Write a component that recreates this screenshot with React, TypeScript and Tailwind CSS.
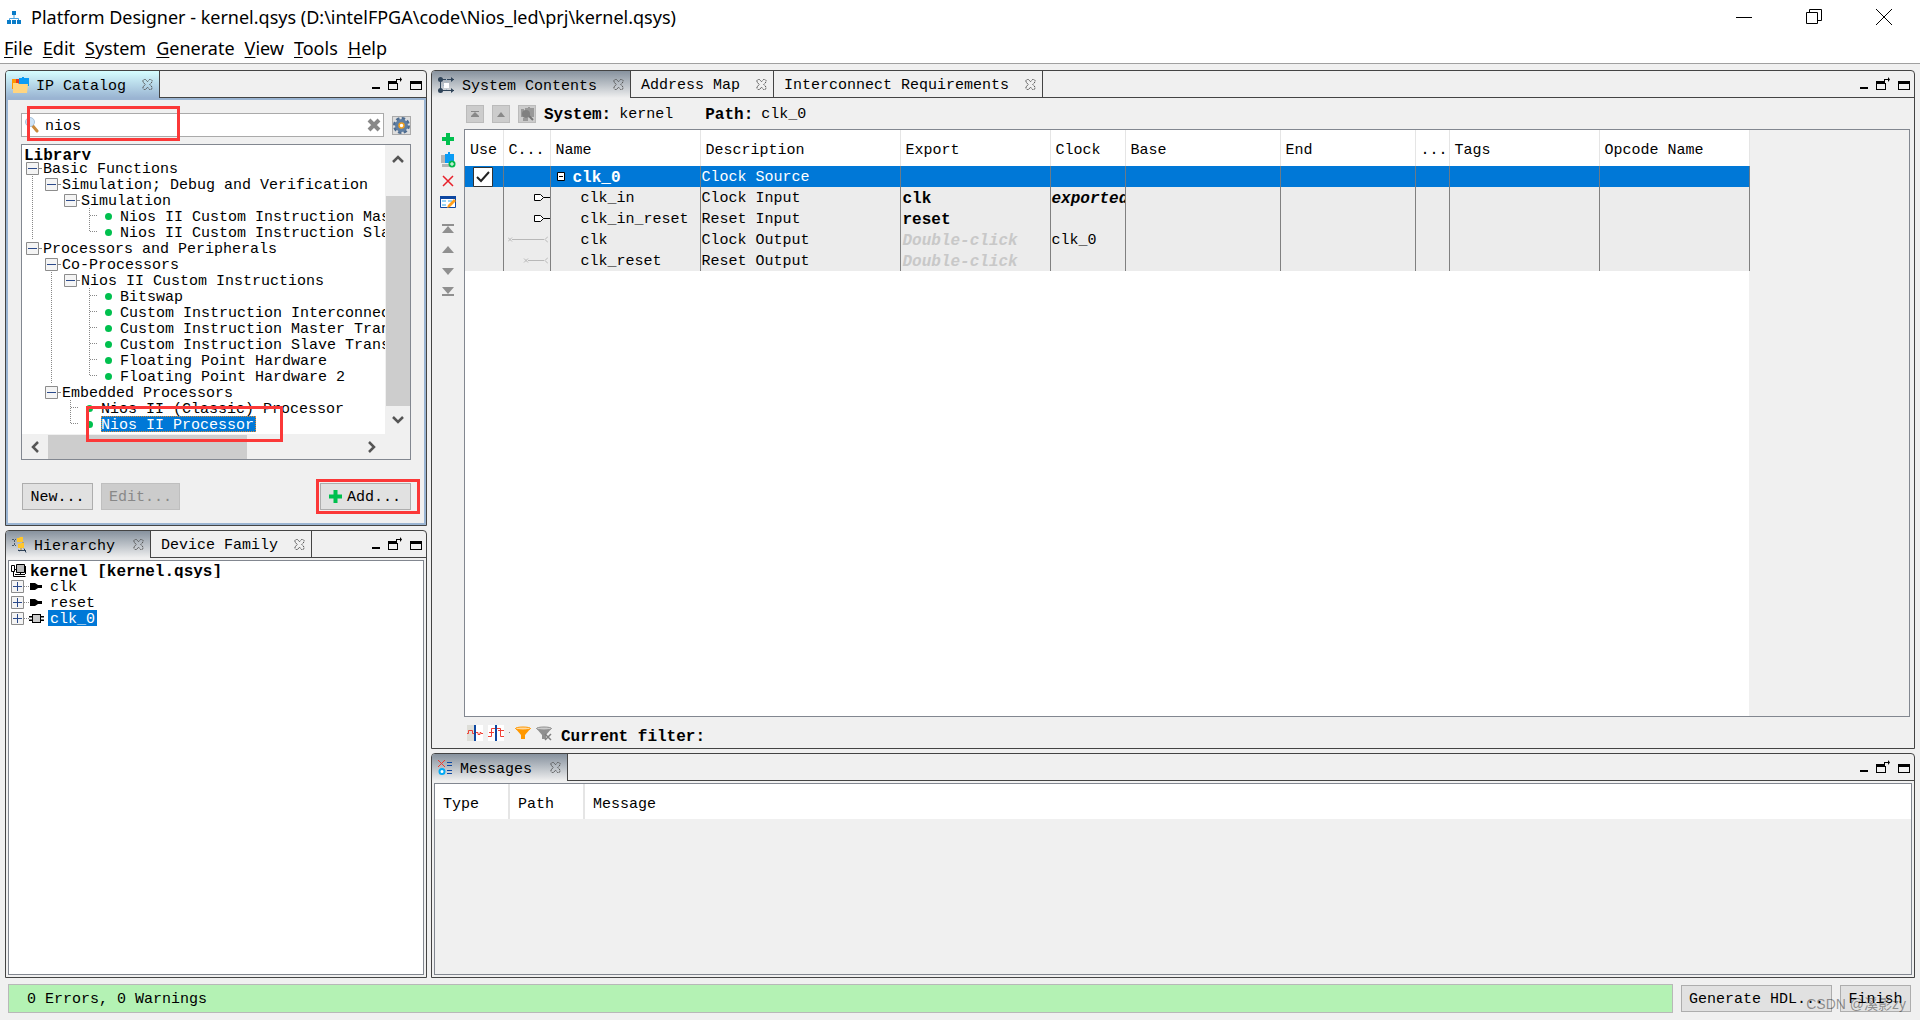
import type { ReactNode } from 'react';

type TabItem = { label: string; width: string; icon?: ReactNode };

interface TreeRow {
  // one char per indent level: '|' line, 'T' branch, 'L' last branch, ' ' blank
  guides: string;
  text: string;
  leaf?: boolean;
  selected?: boolean;
}

const libraryRows: TreeRow[] = [
  { guides: '', text: 'Basic Functions' },
  { guides: '|', text: 'Simulation; Debug and Verification' },
  { guides: '| ', text: 'Simulation' },
  { guides: '|  T', text: 'Nios II Custom Instruction Master', leaf: true },
  { guides: '|  L', text: 'Nios II Custom Instruction Slave', leaf: true },
  { guides: '', text: 'Processors and Peripherals' },
  { guides: ' ', text: 'Co-Processors' },
  { guides: ' |', text: 'Nios II Custom Instructions' },
  { guides: ' | T', text: 'Bitswap', leaf: true },
  { guides: ' | T', text: 'Custom Instruction Interconnect', leaf: true },
  { guides: ' | T', text: 'Custom Instruction Master Translator', leaf: true },
  { guides: ' | T', text: 'Custom Instruction Slave Translator', leaf: true },
  { guides: ' | T', text: 'Floating Point Hardware', leaf: true },
  { guides: ' | L', text: 'Floating Point Hardware 2', leaf: true },
  { guides: ' ', text: 'Embedded Processors' },
  { guides: '  T', text: 'Nios II (Classic) Processor', leaf: true },
  { guides: '  L', text: 'Nios II Processor', leaf: true, selected: true },
];

const columns = [
  { label: 'Use', width: 'w-[38px]' },
  { label: 'C...', width: 'w-[47px]' },
  { label: 'Name', width: 'w-[150px]' },
  { label: 'Description', width: 'w-[200px]' },
  { label: 'Export', width: 'w-[150px]' },
  { label: 'Clock', width: 'w-[75px]' },
  { label: 'Base', width: 'w-[155px]' },
  { label: 'End', width: 'w-[135px]' },
  { label: '...', width: 'w-[34px]' },
  { label: 'Tags', width: 'w-[150px]' },
  { label: 'Opcode Name', width: 'w-[150px]' },
];

const signals = [
  { name: 'clk_in', description: 'Clock Input', exported: 'clk', clock: 'exported', wire: 'pin' },
  { name: 'clk_in_reset', description: 'Reset Input', exported: 'reset', clock: '', wire: 'pin' },
  { name: 'clk', description: 'Clock Output', exported: '', clock: 'clk_0', wire: 'long' },
  { name: 'clk_reset', description: 'Reset Output', exported: '', clock: '', wire: 'short' },
];

const menus = ['File', 'Edit', 'System', 'Generate', 'View', 'Tools', 'Help'];

const CloseGlyph = () => (
  <svg width="11" height="11" viewBox="0 0 11 11" fill="none" stroke="#555" strokeWidth="1">
    <path d="M1 1.5 2 .5h1.5l2 2.2 2-2.2H9l1 1V3L7.8 5.5 10 8v1.5l-1 1H7.5l-2-2.3-2 2.3H2l-1-1V8l2.2-2.5L1 3z" strokeDasharray="2 .6" />
  </svg>
);

const PlusGlyph = () => (
  <svg width="13" height="13" viewBox="0 0 13 13" fill="#00c04e">
    <path d="M4.5 0h4v4.5H13v4H8.5V13h-4V8.5H0v-4h4.5z" />
  </svg>
);

const FolderIcon = () => (
  <svg width="17" height="16" viewBox="0 0 17 16">
    <path d="M0 2h4v10H0z" fill="#ff9800" />
    <path d="M4 2h4v6H4z" fill="#e53b24" />
    <path d="M7 1h3V0h2v1h5v8H7z" fill="#0a9cf5" />
    <path d="M1 6h5l1 1h9l-1 9H1z" fill="#ffd580" />
  </svg>
);

const NetIcon = () => (
  <svg width="17" height="16" viewBox="0 0 17 16" fill="none" stroke="#2f4358">
    <path d="M2.500 3v10M3 2.500h13M3 13.500h13" />
    <path d="M8.500 2v4M8.500 10v4M5 8.500h2" stroke="#9fb4c9" strokeDasharray="1 1" />
    <g fill="#2f4358" stroke="none">
      <circle cx="2.500" cy="2.500" r="2.500" />
      <circle cx="2.500" cy="13.500" r="2.500" />
      <path d="M13 0 16 2.500 13 5zM13 11 16 13.500 13 16z" />
    </g>
    <path d="M6 6h5v5H6z" fill="#fff" stroke="none" />
  </svg>
);

const HierarchyIcon = () => (
  <svg width="15" height="16" viewBox="0 0 15 16">
    <path d="M2.500 3v6M0 2.500h4M0 8.500h4" stroke="#4b5a68" fill="none" strokeDasharray="2 1" />
    <path d="M5 1h2l1-1h3v5H5zM6 7h2l1-1h3v5H6z" fill="#ffc62b" />
    <path d="M11 5v1M9 11v2" stroke="#b78a1d" />
    <path d="M6 13.500h8m-2-2 2 4M6 13l2 1" stroke="#2f4358" fill="none" />
  </svg>
);

const MessagesIcon = () => (
  <svg width="15" height="15" viewBox="0 0 15 15">
    <path d="M0 0 7 7M7 0 0 7" stroke="#ef3b2d" />
    <path d="M9 2.500h5M9 5.500h5M9 10.500h5M9 13.500h5" stroke="#0d47a1" />
    <circle cx="4" cy="11.500" r="2.500" fill="#fff" stroke="#03a9f4" strokeWidth="2" />
  </svg>
);

function Panel({ tabs, blue, className, children }: { tabs: TabItem[]; blue?: boolean; className: string; children: ReactNode }) {
  const gradient = blue ? 'from-[#d6feff] to-[#9ab4d2]' : 'from-[#87929e] to-[#f0f0f0]';
  return (
    <section className={`flex flex-col rounded-t-[4px] border border-[#444] bg-[#f0f0f0] ${className}`}>
      <div className="flex h-[27px] shrink-0">
        {tabs.map((tab, i) => (
          <div
            key={tab.label}
            className={`flex shrink-0 items-center border-r border-[#444] pr-1.5 ${tab.width} ${
              i === 0 ? `rounded-tl-[3px] bg-linear-to-b pl-1.5 ${gradient}` : 'border-b pl-2.5'
            }`}
          >
            <button className="flex items-center gap-[7px] whitespace-nowrap">
              {tab.icon}
              <span className="pt-1">{tab.label}</span>
            </button>
            <button className="ml-auto" aria-label={`Close ${tab.label}`}>
              <CloseGlyph />
            </button>
          </div>
        ))}
        <div className="flex flex-1 items-center justify-end gap-2 border-b border-[#444] pr-1">
          <button aria-label="Minimize">
            <svg width="8" height="14" viewBox="0 0 8 14"><path d="M0 10h8v2H0z" /></svg>
          </button>
          <button aria-label="Detach">
            <svg width="14" height="14" viewBox="0 0 14 14">
              <path d="M0 4h9v3H0zM0 4h1v9H0zM9 6h1v7H9zM0 12h10v1H0zM8 2h4V0l2 2.500L12 5V3H9v2H8z" />
            </svg>
          </button>
          <button aria-label="Maximize">
            <svg width="12" height="14" viewBox="0 0 12 14"><path d="M0 4h12v9H0zM1 7v5h10V7z" fillRule="evenodd" /></svg>
          </button>
        </div>
      </div>
      {children}
    </section>
  );
}

function Toggle({ plus }: { plus?: boolean }) {
  return (
    <svg width="13" height="13" viewBox="0 0 13 13" className="shrink-0">
      <path d="M.5.5h12v12H.5z" fill="#f4f4f4" stroke="#8c8c8c" />
      <path d={plus ? 'M2 6.500h9M6.500 2v9' : 'M2 6.500h9'} stroke="#2b4a8b" />
    </svg>
  );
}

function Guide({ kind }: { kind: string }) {
  return (
    <svg width="19" height="16" viewBox="0 0 19 16" className="shrink-0" stroke="#888" strokeDasharray="1 1" fill="none">
      {(kind === '|' || kind === 'T') && <path d="M10.500 0v16" />}
      {kind === 'L' && <path d="M10.500 0v8" />}
      {(kind === 'T' || kind === 'L') && <path d="M11 7.500h8" />}
    </svg>
  );
}

function LibraryTree() {
  return (
    <ul className="h-[289px] flex-1 overflow-hidden bg-white">
      <li className="h-[15px] overflow-hidden pl-0.5 text-base leading-[22px] font-bold">Library</li>
      {libraryRows.map((row) => (
        <li key={row.text} className="flex h-4 items-center overflow-hidden whitespace-nowrap">
          {row.guides.split('').map((kind, i) => (
            <Guide key={i} kind={kind} />
          ))}
          {row.leaf ? (
            <span className="mr-2 ml-[7px] size-[7px] shrink-0 rounded-full bg-[#00c04e]" />
          ) : (
            <span className="mr-0.5 ml-1 flex shrink-0 items-center">
              <Toggle />
              <span className="w-0.5 border-t border-dotted border-[#888]" />
            </span>
          )}
          <span
            className={
              row.selected
                ? 'h-4 bg-[#0078d7] pr-0.5 leading-5 text-white outline-1 -outline-offset-1 outline-dotted outline-[#e08a30]'
                : 'h-4 leading-5'
            }
          >
            {row.text}
          </span>
        </li>
      ))}
    </ul>
  );
}

function Chevron({ d }: { d: string }) {
  return (
    <svg width="12" height="12" viewBox="0 0 12 12" fill="none" stroke="#555" strokeWidth="2.5">
      <path d={d} />
    </svg>
  );
}

function IpCatalog() {
  return (
    <Panel blue className="relative" tabs={[{ label: 'IP Catalog', width: 'w-[154px]', icon: <FolderIcon /> }]}>
      <div className="border-2 border-[#9ab4d2] px-[13px] pt-[13px] pb-[13px]">
        <div className="flex items-center gap-2">
          <label className="flex h-6 flex-1 items-center border border-[#aaa] bg-white px-0.5">
            <svg width="15" height="16" viewBox="0 0 15 16" aria-hidden="true">
              <path d="m8 8 5 6" stroke="#c98a3c" strokeWidth="3" strokeLinecap="round" />
              <circle cx="6" cy="5" r="4.500" fill="#cfe4f7" stroke="#a9c3da" />
            </svg>
            <input aria-label="Search" defaultValue="nios" className="ml-1.5 w-full min-w-0 flex-1 pt-1 outline-none" />
            <button aria-label="Clear">
              <svg width="14" height="14" viewBox="0 0 14 14" stroke="#888" strokeWidth="4"><path d="m2 2 10 10M12 2 2 12" /></svg>
            </button>
          </label>
          <button aria-label="Settings" className="flex size-[19px] items-center justify-center border border-[#aaa] bg-[#ddd]">
            <svg width="17" height="17" viewBox="0 0 17 17">
              <circle cx="8.500" cy="8.500" r="7" fill="none" stroke="#4e6c8f" strokeWidth="3" strokeDasharray="3.300 2.200" />
              <circle cx="8.500" cy="8.500" r="4.500" fill="#fff" stroke="#5f7fa4" strokeWidth="4" />
              <circle cx="8.500" cy="8.500" r="2.500" fill="#fff" stroke="#f0a020" strokeWidth="1.500" />
            </svg>
          </button>
        </div>
        <div className="mt-[7px] border border-[#828790]">
          <div className="flex">
            <LibraryTree />
            <div className="flex w-[25px] flex-col items-center justify-between py-2">
              <Chevron d="M1 9 6 4l5 5" />
              <div className="mt-[31px] w-6 flex-1 bg-[#cdcdcd]" />
              <div className="pt-2">
                <Chevron d="m1 3 5 5 5-5" />
              </div>
            </div>
          </div>
          <div className="flex h-[25px] items-center pr-8 pl-[7px]">
            <Chevron d="M9 1 4 6l5 5" />
            <div className="ml-[7px] h-6 w-[199px] bg-[#cdcdcd]" />
            <div className="ml-auto">
              <Chevron d="m3 1 5 5-5 5" />
            </div>
          </div>
        </div>
        <div className="mt-[23px] flex h-[27px] gap-2 pl-px">
          <button className="w-[71px] border border-[#adadad] bg-[#e1e1e1] pt-0.5">New...</button>
          <button disabled className="w-[79px] border border-[#bfbfbf] bg-[#ccc] pt-0.5 text-[#888]">Edit...</button>
          <button className="ml-auto flex w-[91px] items-center gap-[5px] border border-[#adadad] bg-[#e1e1e1] pl-2">
            <PlusGlyph />
            <span className="pt-0.5">Add...</span>
          </button>
        </div>
      </div>
      {/* highlight frames */}
      <div className="pointer-events-none absolute top-[35px] left-[21px] h-[35px] w-[153px] border-[3px] border-[#fb3838]" />
      <div className="pointer-events-none absolute top-[335px] left-[80px] h-9 w-[197px] border-[3px] border-[#fb3838]" />
      <div className="pointer-events-none absolute top-[408px] left-[310px] h-[35px] w-[104px] border-[3px] border-[#fb3838]" />
    </Panel>
  );
}

function Hierarchy() {
  return (
    <Panel
      className="flex-1"
      tabs={[
        { label: 'Hierarchy', width: 'w-[145px]', icon: <HierarchyIcon /> },
        { label: 'Device Family', width: 'w-[161px]' },
      ]}
    >
      <ul className="m-0.5 flex-1 border border-[#828790] bg-white pt-px pl-0.5">
        <li className="flex h-4 items-center gap-1 overflow-hidden text-base leading-4 font-bold">
          <svg width="15" height="15" viewBox="0 0 15 15" stroke="#000" fill="none">
            <path d="M5.500 1.500h8v8h-8z" fill="#bbb" />
            <path d="M.500 2.500h3v6h-3zM3 6.500h2M2.500 9v4.500h12M4 11.500h10M9.500 10v2M14.500 3v8" />
          </svg>
          <span className="h-4 leading-5">kernel [kernel.qsys]</span>
        </li>
        {['clk', 'reset', 'clk_0'].map((name) => (
          <li key={name} className="flex h-4 items-center">
            <Toggle plus />
            <span className="w-[5px] border-t border-dotted border-[#888]" />
            {name === 'clk_0' ? (
              <svg width="15" height="11" viewBox="0 0 15 11">
                <path d="M0 3h15v1.500H0zM0 6.500h15V8H0z" />
                <path d="M3 1h9v9H3z" />
                <path d="M4 2h7v7H4z" fill="#ccc" />
              </svg>
            ) : (
              <svg width="15" height="11" viewBox="0 0 15 11"><path d="M1 2h5l3 2h4v3H9L6 9H1z" /></svg>
            )}
            <span className={`ml-1 h-4 px-0.5 leading-5 ${name === 'clk_0' ? 'bg-[#0078d7] text-white' : ''}`}>{name}</span>
          </li>
        ))}
      </ul>
    </Panel>
  );
}

function Wire({ kind }: { kind: string }) {
  if (kind === 'pin') {
    return (
      <svg width="16" height="8" viewBox="0 0 16 8" className="ml-auto" fill="#fff" stroke="#000">
        <path d="M.500.500h6l3 3-3 3h-6zM9.500 3.500H16" />
      </svg>
    );
  }
  const start = kind === 'long' ? 0 : 16;
  return (
    <svg width="40" height="8" viewBox="0 0 40 8" className="mr-0.5 ml-auto" fill="none" stroke="#b8b8b8">
      <path d={`M${start} 1.500l4 4M${start + 4} 1.500l-4 4M${start + 4} 3.500H36M40 .500l-3 3 3 3`} />
    </svg>
  );
}

const sideTools: [string, ReactNode][] = [
  ['Add', <path d="M6 2h4v4h4v4h-4v4H6v-4H2V6h4z" fill="#00c04e" />],
  ['Add instance', <><path d="M1 3h5v8H1zM2 12h7v3H2z" fill="#b5b5b5" /><path d="M5 2h3V0h2v2h4v9H5z" fill="#0a9cf5" /><circle cx="12" cy="12" r="3.500" fill="#00b84a" /><path d="M10 12h4M12 10v4" stroke="#fff" /></>],
  ['Remove', <path d="m3 3 10 10M13 3 3 13" stroke="#e8202a" strokeWidth="1.500" />],
  ['Edit', <><path d="M.500 2.500h15v11H.500z" fill="#fff" stroke="#0d47a1" /><path d="M0 2h16v3H0z" fill="#0d47a1" /><path d="M2 7h4M8 7h4M2 11h4" stroke="#29a9ee" /><path d="m7 14 1-3 6-6 2 2-6 6z" fill="#ff9e1b" /></>],
  ['Move to top', <path d="M2 3h12v2H2zM8 5l6 7H2z" fill="#909090" />],
  ['Move up', <path d="m8 4 6 7H2z" fill="#909090" />],
  ['Move down', <path d="m8 12 6-7H2z" fill="#909090" />],
  ['Move to bottom', <path d="m8 10 6-7H2zM2 10h12v2H2z" fill="#909090" />],
];

function SystemTable() {
  return (
    <table className="w-[1284px] table-fixed border-collapse bg-white text-left leading-[18px]">
      <thead>
        <tr className="h-9">
          {columns.map((column, i) => (
            <th key={i} className={`overflow-hidden border-r border-[#e5e5e5] pt-1.5 pl-[5px] font-normal whitespace-nowrap ${column.width}`}>
              {column.label}
            </th>
          ))}
        </tr>
      </thead>
      <tbody>
        <tr className="h-[21px] bg-[#0078d7] text-white">
          <td className="border-r border-[#6c7a86]">
            <input type="checkbox" defaultChecked aria-label="Use clk_0" className="peer sr-only" />
            <svg width="20" height="20" viewBox="0 0 20 20" className="ml-2">
              <path d="M.500.500h19v19H.500z" fill="#fff" stroke="#333" />
              <path d="m4 10 4 4 8-9" fill="none" stroke="#222" strokeWidth="2" />
            </svg>
          </td>
          <td className="border-r border-[#6c7a86]" />
          <td className="border-r border-[#6c7a86] text-base leading-[18px] font-bold">
            <span className="flex items-center gap-2 pl-1.5">
              <svg width="8" height="9" viewBox="0 0 8 9"><path d="M.500.500h7v8h-7z" fill="#fff" stroke="#000" /><path d="M2 4.500h4" stroke="#000" /></svg>
              <span className="pt-[3px]">clk_0</span>
            </span>
          </td>
          <td className="border-r border-[#6c7a86] pt-[3px] pl-px">Clock Source</td>
          {columns.slice(4).map((_, i) => (
            <td key={i} className="border-r border-[#6c7a86]" />
          ))}
        </tr>
        {signals.map((signal) => (
          <tr key={signal.name} className="h-[21px] bg-[#ececec]">
            <td className="border-r border-[#808080]" />
            <td className="border-r border-[#808080]"><Wire kind={signal.wire} /></td>
            <td className="border-r border-[#808080] pt-[3px] pl-[30px]">{signal.name}</td>
            <td className="border-r border-[#808080] pt-[3px] pl-px">{signal.description}</td>
            <td className="border-r border-[#808080] pt-[3px] pl-0.5 text-base leading-[18px] font-bold">
              {signal.exported || <em className="text-[#c8c8c8]">Double-click</em>}
            </td>
            <td
              className={`overflow-hidden border-r border-[#808080] pt-[3px] pl-px ${
                signal.clock === 'exported' ? 'text-base leading-[18px] font-bold italic' : ''
              }`}
            >
              {signal.clock}
            </td>
            {columns.slice(6).map((_, i) => (
              <td key={i} className="border-r border-[#808080]" />
            ))}
          </tr>
        ))}
      </tbody>
    </table>
  );
}

function SystemContents() {
  return (
    <Panel
      className="min-h-0 flex-1"
      tabs={[
        { label: 'System Contents', width: 'w-[199px]', icon: <NetIcon /> },
        { label: 'Address Map', width: 'w-[143px]' },
        { label: 'Interconnect Requirements', width: 'w-[269px]' },
      ]}
    >
      <div className="flex h-[31px] items-center gap-2 pl-[34px]">
        <button aria-label="Go to top" className="size-[18px] border border-[#bbb] bg-[#ccc]">
          <svg viewBox="0 0 16 16"><path d="M4 5h8v1H4zM8 6l4 4H4zM4 10h8v1H4z" fill="#888" /></svg>
        </button>
        <button aria-label="Go up" className="size-[18px] border border-[#bbb] bg-[#ccc]">
          <svg viewBox="0 0 16 16"><path d="m8 6 4 5H4z" fill="#888" /></svg>
        </button>
        <button aria-label="Drill in" className="size-[18px] border border-[#bbb] bg-[#ccc]">
          <svg viewBox="0 0 16 16">
            <path d="M2 3h3v8H2zM6 2h3V1h2v1h4v9H6zM4 12h5v3H4z" fill="#999" />
            <path d="M9 9l5 5" stroke="#777" strokeWidth="2" /><circle cx="7" cy="8" r="4" fill="#808080" />
          </svg>
        </button>
        <span className="pt-0.5 text-base font-bold">System:</span>
        <span className="pt-0.5">kernel</span>
        <span className="ml-6 pt-0.5 text-base font-bold">Path:</span>
        <span className="pt-0.5">clk_0</span>
      </div>
      <div className="flex min-h-0 flex-1 pr-1">
        <div className="flex w-8 flex-col items-center gap-[5px] pt-0.5">
          {sideTools.map(([label, icon], i) => (
            <button key={label} aria-label={label} className={i === 4 ? 'mt-1.5' : ''}>
              <svg width="16" height="16" viewBox="0 0 16 16">{icon}</svg>
            </button>
          ))}
        </div>
        <div className="min-w-0 flex-1 overflow-hidden border border-[#828790]">
          <div className="h-full w-[1284px] bg-white">
            <SystemTable />
          </div>
        </div>
      </div>
      <div className="flex h-[31px] items-center gap-[5px] pl-[35px]">
        <svg width="16" height="16" viewBox="0 0 16 16">
          <path d="M0 0h7v16H0z" fill="#deded8" /><path d="M9 0h7v16H9z" fill="#fff" />
          <path d="M0 8.500h1.500v-3h4v3h2M9 7.500h2v2h2v-2h1v1h2" fill="none" stroke="#ef4035" />
          <path d="M7 0h2v16H7z" fill="#0d47a1" />
        </svg>
        <svg width="16" height="16" viewBox="0 0 16 16">
          <path d="M0 0h16v16H0z" fill="#fff" />
          <path d="M0 11.500h3.500v-8h9v8H16M1 7.500h5M10 5.500h6" fill="none" stroke="#ef4035" />
          <path d="M7 0h2v16H7z" fill="#0d47a1" />
        </svg>
        <span className="size-px bg-[#888]" />
        <svg width="16" height="16" viewBox="0 0 16 16">
          <path d="M0 3h16l-6 7v4H6v-4z" fill="#ff9800" /><ellipse cx="8" cy="3.500" rx="7.500" ry="1.500" fill="#ffd9a0" stroke="#ff9800" />
        </svg>
        <svg width="16" height="16" viewBox="0 0 16 16">
          <path d="M0 3h16l-6 7v4H6v-4z" fill="#909090" /><ellipse cx="8" cy="3.500" rx="7.500" ry="1.500" fill="#ccc" stroke="#909090" />
          <path d="m9 9 6 6M15 9l-6 6" stroke="#808080" strokeWidth="1.500" />
        </svg>
        <span className="ml-1 pt-2 text-base font-bold">Current filter:</span>
      </div>
    </Panel>
  );
}

function Messages() {
  return (
    <Panel className="h-[225px]" tabs={[{ label: 'Messages', width: 'w-[136px]', icon: <MessagesIcon /> }]}>
      <div className="m-0.5 flex-1 border border-[#828790]">
        <table className="w-full table-fixed border-collapse bg-white text-left">
          <thead>
            <tr className="h-[35px]">
              <th className="w-[74px] border-r-2 border-[#e5e5e5] pt-1.5 pl-2 font-normal">Type</th>
              <th className="w-[75px] border-r-2 border-[#e5e5e5] pt-1.5 pl-2 font-normal">Path</th>
              <th className="pt-1.5 pl-2 font-normal">Message</th>
            </tr>
          </thead>
        </table>
      </div>
    </Panel>
  );
}

export default function App() {
  return (
    <div className="flex h-screen flex-col bg-[#f0f0f0] font-['Liberation_Mono','Noto_Sans_CJK_SC',monospace] text-[15px] leading-5 text-black">
      <header className="border-b border-[#a0a0a0] bg-white font-['Noto_Sans','Open_Sans',sans-serif] text-[18px]">
        <div className="flex h-[35px] items-center">
          <svg width="14" height="14" viewBox="0 0 14 14" className="ml-[7px]">
            <path d="M7 4v4M2.500 10V7.500h9V10" fill="none" stroke="#4aa3e0" />
            <path d="M5 0h4v4H5zM0 9h4v4H0zM5 9h4v4H5zM10 9h4v4h-4z" fill="#0a7cc8" />
          </svg>
          <h1 className="ml-2.5 pb-0.5">Platform Designer - kernel.qsys (D:\intelFPGA\code\Nios_led\prj\kernel.qsys)</h1>
          <div className="ml-auto flex gap-[54px] pr-7 pb-0.5">
            <button aria-label="Minimize window">
              <svg width="16" height="16" viewBox="0 0 16 16" stroke="#000"><path d="M0 8.500h16" /></svg>
            </button>
            <button aria-label="Restore window">
              <svg width="16" height="16" viewBox="0 0 16 16" fill="none" stroke="#000"><path d="M.500 3.500h11v11H.500zM3.500 3V.500h12v11H12" /></svg>
            </button>
            <button aria-label="Close window">
              <svg width="16" height="16" viewBox="0 0 16 16" stroke="#000"><path d="m0 0 16 16M16 0 0 16" /></svg>
            </button>
          </div>
        </div>
        <nav className="flex h-7 items-center gap-2.5 pl-1 pb-0.5">
          {menus.map((menu) => (
            <button key={menu}>
              <span className="underline underline-offset-2">{menu[0]}</span>
              {menu.slice(1)}
            </button>
          ))}
        </nav>
      </header>

      <main className="flex min-h-0 flex-1 gap-1 px-[5px] pt-1.5 pb-1.5">
        <div className="flex w-[422px] shrink-0 flex-col gap-1">
          <IpCatalog />
          <Hierarchy />
        </div>
        <div className="flex min-w-0 flex-1 flex-col gap-1">
          <SystemContents />
          <Messages />
        </div>
      </main>

      <footer className="relative flex items-center gap-2 pr-[9px] pb-[7px] pl-2">
        <output className="h-[29px] flex-1 border border-[#b8b8b8] bg-[#b4f2b4] pt-px pl-[18px] leading-7">0 Errors, 0 Warnings</output>
        <button className="h-[27px] w-[151px] border border-[#adadad] bg-[#e1e1e1] pt-0.5 whitespace-nowrap">Generate HDL...</button>
        <button className="h-[27px] w-[71px] border border-[#adadad] bg-[#e1e1e1] pt-0.5">Finish</button>
        <span className="pointer-events-none absolute right-3.5 bottom-1.5 font-['Liberation_Sans','Noto_Sans_CJK_SC',sans-serif] text-sm text-black/40">
          CSDN @溪影zy
        </span>
      </footer>
    </div>
  );
}
